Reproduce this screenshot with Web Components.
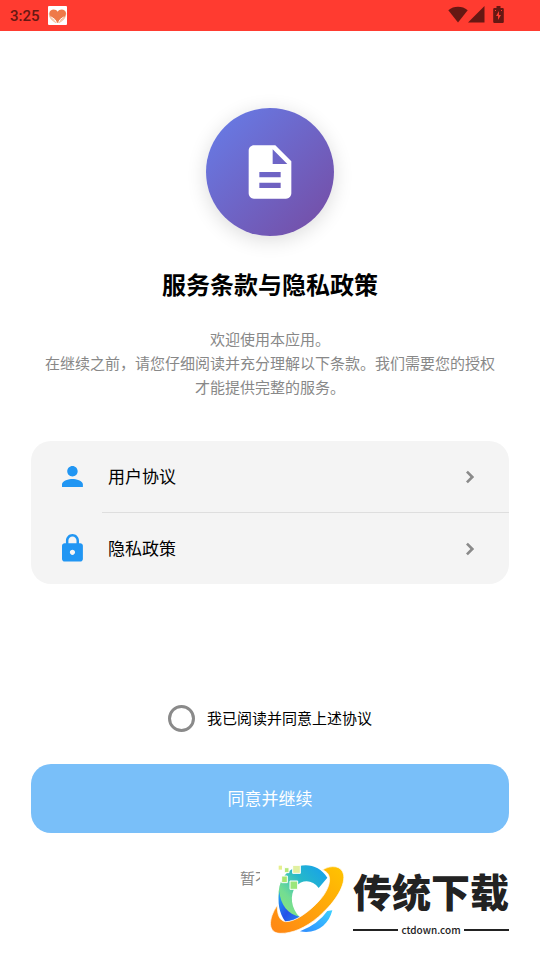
<!DOCTYPE html>
<html lang="zh-CN">
<head>
<meta charset="utf-8">
<meta name="viewport" content="width=device-width, initial-scale=1">
<title>服务条款与隐私政策</title>
<style>
  body { margin: 0; background: #fff; color: #000; font-family: "Noto Sans CJK SC", sans-serif; }
</style>
</head>
<body>
<consent-page></consent-page>
<script>
const define = (name, html) => customElements.define(name, class extends HTMLElement {
  constructor() {
    super();
    const t = document.createElement('template');
    t.innerHTML = html;
    this.attachShadow({ mode: 'open' }).append(t.content.cloneNode(true));
  }
});

define('status-bar', `
<style>
  :host { display: flex; align-items: center; height: 31px; padding: 0 36px 0 10px; background: #ff3b30; color: #661813; font: 500 15px/20px Roboto, sans-serif; box-sizing: border-box; }
  .app { margin-left: 8px; }
  .system { display: flex; align-items: center; margin-left: auto; padding-bottom: 2px; }
  .battery { margin-left: 8px; }
  svg { display: block; }
</style>
<span>3:25</span>
<svg class="app" width="19" height="19" viewBox="0 0 57 57" aria-hidden="true">
  <rect width="57" height="57" rx="3" fill="#fff"/>
  <path d="M4 22c0 12 6 18 13 23l8 5M53 22c0 12-6 18-13 23l-8 5" fill="none" stroke="#f5c3a0" stroke-width="4"/>
  <path d="M29 17C24 7 5 8 4 21c0 9 7 15 14 20 4 3 7 5 9 9h4c2-4 5-6 9-9 7-5 14-11 14-20C53 8 34 7 29 17Z" fill="#ee7948"/>
  <path d="m10 33 11 8 4 8M47 33l-11 8-4 8" fill="none" stroke="#fff" stroke-width="3"/>
</svg>
<span class="system">
  <svg width="20" height="17" viewBox="0 0 20 17" aria-hidden="true"><path d="M10 16.5.3 4.2C5.800-.3 14.200-.3 19.700 4.200Z" fill="currentColor"/></svg>
  <svg width="17" height="17" viewBox="0 0 17 17" aria-hidden="true"><path d="M16.500 0v16.500H0Z" fill="currentColor"/></svg>
  <svg class="battery" width="11" height="17" viewBox="0 0 11 17" aria-hidden="true"><path d="M3.500 0h4v2H10l.8.8v13.400l-.8.800H1l-.8-.8V2.800L1 2h2.500Z" fill="currentColor"/><path d="M6 5 3 10h2v4l3-5H6ZM2 4h1v1H2ZM8 4h1v1H8Z" fill="#ff3b30"/></svg>
</span>`);

define('hero-badge', `
<style>
  :host { display: grid; place-items: center; width: 128px; height: 128px; border-radius: 50%; background: linear-gradient(135deg, #667eea, #764ba2); box-shadow: 0 4px 20px rgba(0,0,0,.14); }
  svg { display: block; }
</style>
<svg width="64" height="64" viewBox="0 0 24 24" fill="#fff" aria-hidden="true"><path d="M14 2H6c-1.100 0-1.990.9-1.990 2L4 20c0 1.100.89 2 1.990 2H18c1.100 0 2-.9 2-2V8l-6-6zm2 16H8v-2h8v2zm0-4H8v-2h8v2zm-3-5V3.500L18.500 9H13z"/></svg>`);

define('policy-link', `
<style>
  :host { display: block; }
  a { display: flex; align-items: center; height: 71px; padding: 0 25px 0 27px; color: inherit; text-decoration: none; font-size: 17px; line-height: 24px; }
  ::slotted(svg) { display: block; width: 29px; height: 29px; margin-right: 21px; fill: #2196f3; }
  .text { flex: 1; padding-bottom: 2px; }
  .chevron { display: block; fill: #8a8a8a; }
</style>
<a href="#"><slot name="icon"></slot><span class="text"><slot></slot></span>
<svg class="chevron" width="28" height="28" viewBox="0 0 24 24" aria-hidden="true"><path d="M10 6 8.200 7.800 12.400 12l-4.200 4.200L10 18l6-6z" transform="translate(1.200 1.200) scale(.9)"/></svg></a>`);

define('policy-list', `
<style>
  :host { display: grid; border-radius: 20px; background: #f4f4f4; overflow: hidden; }
  hr { width: auto; height: 1px; margin: 0 0 0 71px; border: 0; background: #dedede; }
</style>
<policy-link><svg slot="icon" viewBox="0 0 24 24" aria-hidden="true"><path d="M12 12c2.210 0 4-1.790 4-4s-1.790-4-4-4-4 1.790-4 4 1.790 4 4 4zm0 2c-2.670 0-8 1.340-8 4v2h16v-2c0-2.660-5.330-4-8-4z" transform="translate(-1 -1) scale(1.080)"/></svg>用户协议</policy-link>
<hr>
<policy-link><svg slot="icon" viewBox="0 0 24 24" aria-hidden="true"><path d="M18 8h-1V6c0-2.760-2.240-5-5-5S7 3.240 7 6v2H6c-1.100 0-2 .9-2 2v10c0 1.100.9 2 2 2h12c1.100 0 2-.9 2-2V10c0-1.100-.9-2-2-2zm-6 9c-1.100 0-2-.9-2-2s.9-2 2-2 2 .9 2 2-.9 2-2 2zm3.100-9H8.900V6c0-1.710 1.390-3.100 3.100-3.100s3.100 1.390 3.100 3.100v2z" transform="translate(-1 -1) scale(1.080)"/></svg>隐私政策</policy-link>`);

define('agree-check', `
<style>
  :host { display: flex; justify-content: center; }
  label { display: flex; align-items: center; gap: 12px; font-size: 15px; line-height: 24px; }
  span { padding-bottom: 2px; }
  input { appearance: none; width: 27px; height: 27px; margin: 0; border: 3px solid #8a8a8a; border-radius: 50%; background: #fff; box-sizing: border-box; }
  input:checked { background: #2196f3; border-color: #2196f3; }
</style>
<label><input type="checkbox"><span>我已阅读并同意上述协议</span></label>`);

define('action-button', `
<style>
  :host { display: block; }
  button { display: block; width: 100%; height: 69px; padding: 0 0 2px; border: 0; border-radius: 20px; background: #79bff9; color: #fff; font: 400 17px/24px "Noto Sans CJK SC", sans-serif; }
  :host([plain]) button { width: auto; height: 48px; margin: 0 auto; padding: 0; background: none; color: #888; font-size: 15px; }
</style>
<button type="button"><slot></slot></button>`);

define('site-mark', `
<style>
  :host { display: flex; align-items: center; gap: 5px; padding: 0 31px 0 4px; background: #fff; box-sizing: border-box; }
  .logo { display: block; flex: none; }
  .words { display: grid; flex: 1; color: #222; }
  .name { font: 900 39px/56px "Noto Sans CJK SC", sans-serif; white-space: nowrap; }
  .site { display: flex; align-items: center; gap: 3px; padding-top: 4px; font: 500 10px/16px "Noto Sans CJK SC", sans-serif; }
  .site::before, .site::after { content: ""; flex: 1; height: 2px; background: #222; }
</style>
<svg class="logo" width="84" height="74" viewBox="100 40 252 222" aria-hidden="true">
  <defs>
    <linearGradient id="c" x1="0" y1="1" x2="1" y2="0"><stop offset="0" stop-color="#8ee875"/><stop offset=".3" stop-color="#72dc93"/><stop offset=".6" stop-color="#25b8ca"/><stop offset="1" stop-color="#159df0"/></linearGradient>
    <linearGradient id="o" x1="0" y1="1" x2="1" y2="0"><stop offset="0" stop-color="#ff8515"/><stop offset=".5" stop-color="#ffa40b"/><stop offset="1" stop-color="#ffc400"/></linearGradient>
    <linearGradient id="b" x1="0" y1="0" x2="1" y2="1"><stop offset="0" stop-color="#20a8f5"/><stop offset=".55" stop-color="#2452e8"/><stop offset="1" stop-color="#2784ef"/></linearGradient>
    <linearGradient id="l" x1="0" y1="1" x2="1" y2="0"><stop offset="0" stop-color="#2f8cff"/><stop offset="1" stop-color="#3cd0ff"/></linearGradient>
  </defs>
  <path d="M290 84C270 52 235 41 204 50C163 62 141 97 144 143C147 175 170 200 208 203C181 177 176 135 195 111C215 88 246 90 264 115Z" fill="url(#c)"/>
  <path d="M146 124C140 158 145 189 164 216Q188 214 208 202C172 193 149 166 146 124Z" fill="url(#b)"/>
  <path d="M208 245Q262 224 290 184L305 182C294 225 260 254 208 245Z" fill="url(#l)"/>
  <path d="M275 61C302 44 334 48 339 76C344 115 304 166 264 201C224 235 184 252 148 251C111 250 112 208 140 167C139 193 146 214 165 216C194 217 237 185 266 153C297 119 312 72 275 61Z" fill="url(#o)" stroke="#fff" stroke-width="2"/>
  <g stroke="#fff" stroke-width="3"><path d="M186 47h23v24h-23Z" fill="#e1f0a0"/><path d="M178 94h23v25h-23Z" fill="#9ce67b"/><path d="M153 79h17v20h-17Z" fill="#a7e66e"/><path d="M161 54h14v15h-14Z" fill="#b5e878"/></g>
  <path d="M144 48h10v12h-10Z" fill="#e6ef8e"/>
</svg>
<span class="words"><span class="name">传统下载</span><span class="site">ctdown.com</span></span>`);

define('consent-page', `
<style>
  :host { display: flex; flex-direction: column; min-height: 100vh; position: relative; }
  main { flex: 1; display: flex; flex-direction: column; padding: 77px 31px 58px; }
  hero-badge { align-self: center; }
  h1 { margin: 30px 0 0; text-align: center; font-size: 24px; line-height: 36px; font-weight: 700; }
  p { margin: 25px 0 42px; text-align: center; color: #888; font-size: 15px; line-height: 24px; }
  agree-check { margin-top: auto; margin-bottom: 32px; }
  .refuse { margin-top: 21px; }
  site-mark { position: absolute; right: 0; bottom: 16px; width: 280px; height: 88px; }
</style>
<status-bar></status-bar>
<main>
  <hero-badge></hero-badge>
  <h1>服务条款与隐私政策</h1>
  <p>欢迎使用本应用。<br>在继续之前，请您仔细阅读并充分理解以下条款。我们需要您的授权<br>才能提供完整的服务。</p>
  <policy-list></policy-list>
  <agree-check></agree-check>
  <action-button>同意并继续</action-button>
  <action-button class="refuse" plain>暂不同意</action-button>
</main>
<site-mark></site-mark>`);
</script>
</body>
</html>
